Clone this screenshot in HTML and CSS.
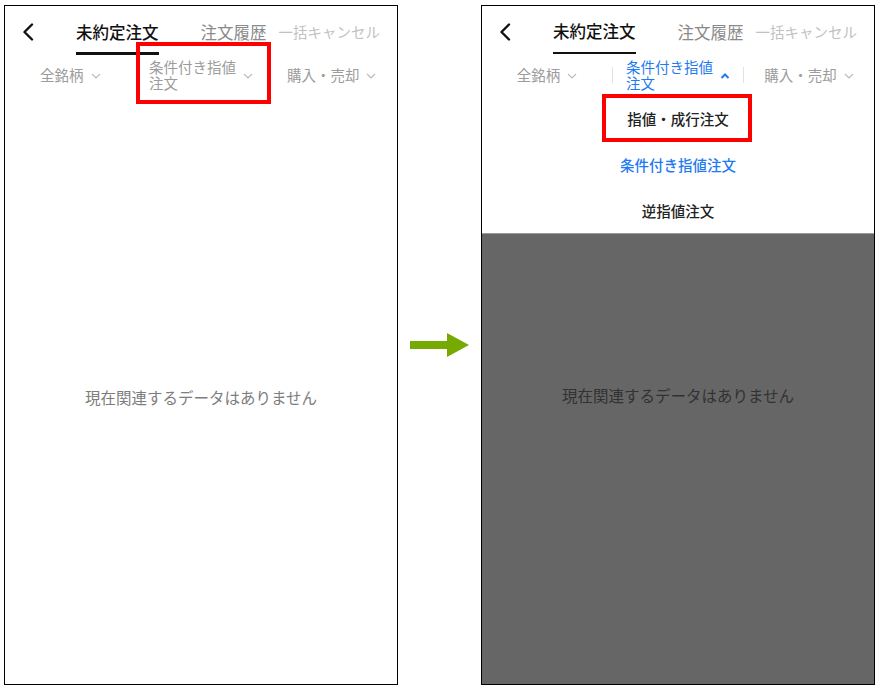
FILE: index.html
```html
<!DOCTYPE html>
<html lang="ja">
<head>
<meta charset="utf-8">
<title>未約定注文</title>
<link rel="stylesheet" href="styles.css">
</head>
<body>
<div class="stage">
  <section class="phone">
    <header class="tabs">
      <span class="back"><svg width="12" height="18" viewBox="0 0 12 18"><path d="M10 1.5 L2.5 9 L10 16.5" fill="none" stroke="#111" stroke-width="2.4" stroke-linecap="round" stroke-linejoin="round"/></svg></span>
      <span class="tab tab-active">未約定注文</span>
      <span class="tab tab-history">注文履歴</span>
      <span class="tab tab-cancel">一括キャンセル</span>
    </header>
    <div class="filters">
      <div class="filter"><span class="filter-label">全銘柄</span><svg class="chev" width="10" height="6" viewBox="0 0 10 6"><path d="M1 1 L5 5 L9 1" fill="none" stroke="#bbb" stroke-width="1.2"/></svg></div>
      <div class="filter"><span class="filter-label"><span class="filter-line">条件付き指値</span><span class="filter-line">注文</span></span><svg class="chev" width="10" height="6" viewBox="0 0 10 6"><path d="M1 1 L5 5 L9 1" fill="none" stroke="#bbb" stroke-width="1.2"/></svg></div>
      <div class="filter"><span class="filter-label">購入・売却</span><svg class="chev" width="10" height="6" viewBox="0 0 10 6"><path d="M1 1 L5 5 L9 1" fill="none" stroke="#bbb" stroke-width="1.2"/></svg></div>
    </div>
    <p class="empty">現在関連するデータはありません</p>
    <div class="highlight highlight-filter"></div>
  </section>

  <div class="arrow"><svg width="59" height="24" viewBox="0 0 59 24"><rect x="0" y="8" width="38" height="8" fill="#76aa00"/><polygon points="37,0 59,12 37,24" fill="#76aa00"/></svg></div>

  <section class="phone">
    <header class="tabs">
      <span class="back"><svg width="12" height="18" viewBox="0 0 12 18"><path d="M10 1.5 L2.5 9 L10 16.5" fill="none" stroke="#111" stroke-width="2.4" stroke-linecap="round" stroke-linejoin="round"/></svg></span>
      <span class="tab tab-active tab-active-thin">未約定注文</span>
      <span class="tab tab-history">注文履歴</span>
      <span class="tab tab-cancel">一括キャンセル</span>
    </header>
    <div class="filters">
      <div class="filter"><span class="filter-label">全銘柄</span><svg class="chev" width="10" height="6" viewBox="0 0 10 6"><path d="M1 1 L5 5 L9 1" fill="none" stroke="#bbb" stroke-width="1.2"/></svg></div>
      <span class="sep"></span>
      <div class="filter filter-open"><span class="filter-label"><span class="filter-line">条件付き指値</span><span class="filter-line">注文</span></span><svg class="chev" width="10" height="6" viewBox="0 0 10 6"><path d="M1.5 5 L5 1.5 L8.5 5" fill="none" stroke="#1f7bf2" stroke-width="2"/></svg></div>
      <span class="sep"></span>
      <div class="filter"><span class="filter-label">購入・売却</span><svg class="chev" width="10" height="6" viewBox="0 0 10 6"><path d="M1 1 L5 5 L9 1" fill="none" stroke="#bbb" stroke-width="1.2"/></svg></div>
    </div>
    <p class="empty empty-dim">現在関連するデータはありません</p>
    <div class="dropdown">
      <ul class="menu">
        <li class="menu-item">指値・成行注文</li>
        <li class="menu-item menu-item-active">条件付き指値注文</li>
        <li class="menu-item">逆指値注文</li>
      </ul>
      <div class="scrim"></div>
    </div>
    <div class="highlight highlight-menu"></div>
  </section>
</div>
</body>
</html>
```

FILE: styles.css
```css
html, body {
  margin: 0;
  background: #fff;
}

body {
  font-family: "Noto Sans CJK JP", "Noto Sans", sans-serif;
  color: #111;
}

.stage {
  display: flex;
  align-items: center;
  padding: 5px 0 0 4px;
}

.phone {
  position: relative;
  width: 394px;
  height: 680px;
  box-sizing: border-box;
  border: 1px solid #000;
  background: #fff;
  overflow: hidden;
  flex-shrink: 0;
}

.arrow {
  width: 83px;
  box-sizing: border-box;
  padding-left: 12px;
  display: flex;
  flex-shrink: 0;
}

/* tabs row */
.tabs {
  display: flex;
  align-items: center;
  height: 49px;
  box-sizing: border-box;
  padding: 3px 0 0 17px;
}

.back {
  display: flex;
  width: 12px;
  margin-right: 42px;
}

.tab {
  font-size: 16.5px;
  line-height: 22px;
  white-space: nowrap;
}

.tab-active {
  align-self: stretch;
  display: flex;
  align-items: center;
  padding-top: 3px;
  border-bottom: 3px solid #111;
  color: #111;
  font-weight: 500;
  margin-right: 42px;
}

.tab-active-thin {
  border-bottom-width: 2px;
  padding-top: 1px;
  margin-bottom: 1px;
}

.tab-history {
  color: #8a8a8a;
  margin-right: 12px;
}

.tab-cancel {
  color: #c2c2c2;
  font-size: 14.5px;
}

/* filters row */
.filters {
  display: flex;
  height: 40px;
}

.filter {
  flex: 1;
  display: flex;
  align-items: center;
  justify-content: center;
  gap: 7px;
  color: #9c9c9c;
  font-size: 14.5px;
  line-height: 16px;
  white-space: nowrap;
}

.filter-label {
  display: flex;
  flex-direction: column;
}

.filter-line {
  display: block;
  height: 16px;
}

.filter-open {
  color: #1f7bf2;
}

.chev {
  flex-shrink: 0;
  margin-top: 1px;
}

.sep {
  align-self: center;
  width: 1px;
  height: 16px;
  background: #e2e2e2;
}

/* empty state */
.empty {
  margin: 291px 0 0;
  text-align: center;
  color: #7d7d7d;
  font-size: 15.5px;
  line-height: 22px;
}

.empty-dim {
  margin-top: 289px;
}

/* dropdown + scrim (overlays the list area) */
.dropdown {
  position: absolute;
  top: 89px;
  left: 0;
  right: 0;
  bottom: 0;
  display: flex;
  flex-direction: column;
}

.menu {
  list-style: none;
  margin: 0;
  padding: 0;
  background: #fff;
}

.menu-item {
  height: 46px;
  display: flex;
  align-items: center;
  justify-content: center;
  font-size: 14.5px;
  font-weight: 500;
  color: #222;
}

.menu-item-active {
  color: #1f7bf2;
}

.scrim {
  flex: 1;
  background: rgba(0, 0, 0, 0.6);
  border-top: 1px solid #9a9a9a;
}

/* red callout boxes */
.highlight {
  position: absolute;
  box-sizing: border-box;
  border: 4px solid #ff0000;
}

.highlight-filter {
  left: 131px;
  top: 36px;
  width: 135px;
  height: 62px;
}

.highlight-menu {
  left: 120px;
  top: 88px;
  width: 150px;
  height: 48px;
}
```
